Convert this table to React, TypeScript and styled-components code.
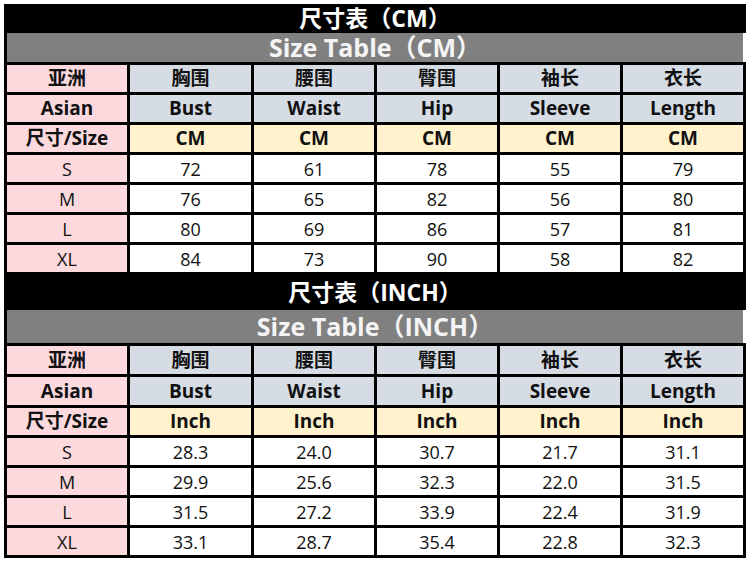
import React from "react";
import styled, { createGlobalStyle } from "styled-components";

const GlobalStyle = createGlobalStyle`
  html, body {
    margin: 0;
    padding: 0;
    background: #ffffff;
  }
  body {
    font-family: "Open Sans", "Noto Sans CJK SC", sans-serif;
    color: #111111;
  }
`;

type Tone = "pink" | "blue" | "yellow" | "white";

const toneColor: Record<Tone, string> = {
  pink: "#fbd9dd",
  blue: "#d6dce4",
  yellow: "#fff2cc",
  white: "#ffffff",
};

const Page = styled.div`
  padding: 4px 0 0 4px;
  width: 742px;
  display: flex;
  flex-direction: column;
`;

const Section = styled.section`
  display: flex;
  flex-direction: column;
`;

const TitleBar = styled.div<{ $height: number }>`
  height: ${(p) => p.$height}px;
  background: #000000;
  color: #ffffff;
  display: flex;
  align-items: center;
  justify-content: center;
  font-family: "Open Sans", "Noto Sans CJK SC", sans-serif;
  font-weight: 700;
  font-size: 23px;
  line-height: 1;
`;

const SubTitleBar = styled.div<{ $height: number }>`
  height: ${(p) => p.$height}px;
  margin-right: 3px;
  background: #808080;
  border-left: 3px solid #000000;
  color: #f4f4f4;
  display: flex;
  align-items: center;
  justify-content: center;
  font-family: "Open Sans", "Noto Sans CJK SC", sans-serif;
  font-weight: 700;
  font-size: 25px;
  line-height: 1;
`;

const Grid = styled.div<{ $rows: string }>`
  display: grid;
  grid-template-columns: 120px 121px 120px 120px 120px 120px;
  grid-template-rows: ${(p) => p.$rows};
  gap: 3px;
  padding: 3px;
  background: #000000;
  width: max-content;
`;

const Cell = styled.div<{ $tone: Tone; $bold?: boolean }>`
  background: ${(p) => toneColor[p.$tone]};
  display: flex;
  align-items: center;
  justify-content: center;
  font-family: "Open Sans", "Noto Sans CJK SC", sans-serif;
  font-weight: ${(p) => (p.$bold ? 700 : 400)};
  font-size: ${(p) => (p.$bold ? "19px" : "18px")};
  color: #111111;
  line-height: 1;
  white-space: nowrap;
`;

const cnHeaders = ["胸围", "腰围", "臀围", "袖长", "衣长"];
const enHeaders = ["Bust", "Waist", "Hip", "Sleeve", "Length"];
const sizes = ["S", "M", "L", "XL"];

const cmData = [
  ["72", "61", "78", "55", "79"],
  ["76", "65", "82", "56", "80"],
  ["80", "69", "86", "57", "81"],
  ["84", "73", "90", "58", "82"],
];

const inchData = [
  ["28.3", "24.0", "30.7", "21.7", "31.1"],
  ["29.9", "25.6", "32.3", "22.0", "31.5"],
  ["31.5", "27.2", "33.9", "22.4", "31.9"],
  ["33.1", "28.7", "35.4", "22.8", "32.3"],
];

type TableProps = {
  title: string;
  subtitle: string;
  unit: string;
  data: string[][];
  titleHeight: number;
  subHeight: number;
  rows: string;
};

function SizeTable({ title, subtitle, unit, data, titleHeight, subHeight, rows }: TableProps) {
  return (
    <Section>
      <TitleBar $height={titleHeight}>{title}</TitleBar>
      <SubTitleBar $height={subHeight}>{subtitle}</SubTitleBar>
      <Grid $rows={rows}>
        <Cell $tone="pink" $bold>亚洲</Cell>
        {cnHeaders.map((h) => (
          <Cell key={h} $tone="blue" $bold>{h}</Cell>
        ))}
        <Cell $tone="pink" $bold>Asian</Cell>
        {enHeaders.map((h) => (
          <Cell key={h} $tone="blue" $bold>{h}</Cell>
        ))}
        <Cell $tone="pink" $bold>尺寸/Size</Cell>
        {enHeaders.map((h) => (
          <Cell key={h} $tone="yellow" $bold>{unit}</Cell>
        ))}
        {data.map((row, i) => (
          <React.Fragment key={sizes[i]}>
            <Cell $tone="pink">{sizes[i]}</Cell>
            {row.map((v, j) => (
              <Cell key={j} $tone="white">{v}</Cell>
            ))}
          </React.Fragment>
        ))}
      </Grid>
    </Section>
  );
}

export default function App() {
  return (
    <>
      <GlobalStyle />
      <Page>
        <SizeTable
          title="尺寸表（CM）"
          subtitle="Size Table（CM）"
          unit="CM"
          data={cmData}
          titleHeight={29}
          subHeight={29}
          rows="repeat(7, 27px)"
        />
        <SizeTable
          title="尺寸表（INCH）"
          subtitle="Size Table（INCH）"
          unit="Inch"
          data={inchData}
          titleHeight={35}
          subHeight={33}
          rows="28px 28px repeat(5, 27px)"
        />
      </Page>
    </>
  );
}
